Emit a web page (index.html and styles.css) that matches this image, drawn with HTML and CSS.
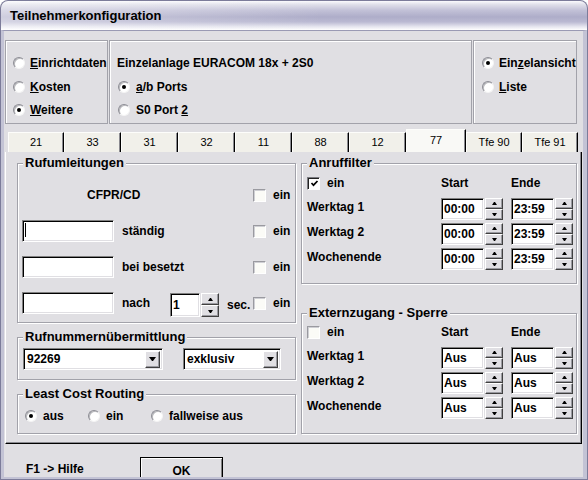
FILE: index.html
```html
<!DOCTYPE html>
<html>
<head>
<meta charset="utf-8">
<title>Teilnehmerkonfiguration</title>
<link rel="stylesheet" href="styles.css">
</head>
<body>
<div class="window">
  <div class="titlebar">Teilnehmerkonfiguration</div>
  <div class="frame">
    <div class="client">
      <div class="toprow">
        <div class="panel p1">
          <div class="rrow"><span class="radio"></span><span><u>E</u>inrichtdaten</span></div>
          <div class="rrow"><span class="radio"></span><span><u>K</u>osten</span></div>
          <div class="rrow"><span class="radio on"></span><span><u>W</u>eitere</span></div>
        </div>
        <div class="panel p2">
          <div class="rrow">Einzelanlage EURACOM 18x + 2S0</div>
          <div class="rrow ind"><span class="radio on"></span><span><u>a</u>/b Ports</span></div>
          <div class="rrow ind"><span class="radio"></span><span>S0 Port <u>2</u></span></div>
        </div>
        <div class="panel p3">
          <div class="rrow"><span class="radio on"></span><span>Ein<u>z</u>elansicht</span></div>
          <div class="rrow"><span class="radio"></span><span><u>L</u>iste</span></div>
        </div>
      </div>

      <div class="tabs">
        <div class="tab first">21</div>
        <div class="tab">33</div>
        <div class="tab">31</div>
        <div class="tab">32</div>
        <div class="tab">11</div>
        <div class="tab">88</div>
        <div class="tab">12</div>
        <div class="tab sel">77</div>
        <div class="tab narrow">Tfe 90</div>
        <div class="tab narrow">Tfe 91</div>
      </div>

      <div class="pane">
        <div class="col">
          <div class="group g-ruf">
            <div class="gtitle">Rufumleitungen</div>
            <div class="gbody ruf-body">
              <div class="frow">
                <span class="cfpr">CFPR/CD</span>
                <span class="check"></span><span>ein</span>
              </div>
              <div class="frow">
                <span class="edit numedit"><span class="caret"></span></span>
                <span>ständig</span>
                <span class="check"></span><span>ein</span>
              </div>
              <div class="frow">
                <span class="edit numedit"></span>
                <span>bei besetzt</span>
                <span class="check"></span><span>ein</span>
              </div>
              <div class="frow">
                <span class="edit numedit"></span>
                <span class="nach">
                  <span class="nachlbl">nach</span>
                  <span class="spinfield tall">
                    <span class="edit secedit">1</span>
                    <span class="spin"><span class="sbtn up"></span><span class="sbtn down"></span></span>
                  </span>
                  <span class="seclbl">sec.</span>
                </span>
                <span class="check"></span><span>ein</span>
              </div>
            </div>
          </div>

          <div class="group g-rn">
            <div class="gtitle">Rufnummernübermittlung</div>
            <div class="gbody rn-body">
              <div class="combo c1"><span class="ctext">92269</span><span class="dd"></span></div>
              <div class="combo c2"><span class="ctext">exklusiv</span><span class="dd"></span></div>
            </div>
          </div>

          <div class="group g-lcr">
            <div class="gtitle">Least Cost Routing</div>
            <div class="gbody lcr-body">
              <div class="litem"><span class="radio on"></span><span>aus</span></div>
              <div class="litem"><span class="radio"></span><span>ein</span></div>
              <div class="litem"><span class="radio"></span><span>fallweise aus</span></div>
            </div>
          </div>
        </div>

        <div class="col">
          <div class="group g-af">
            <div class="gtitle">Anruffilter</div>
            <div class="gbody af-body">
              <div class="hrow">
                <span class="hcheck"><span class="check checked"><svg viewBox="0 0 9 9" width="9" height="9"><polyline points="1.5,4 3.5,6.2 7.5,2" fill="none" stroke="#000" stroke-width="1.7"/></svg></span><span>ein</span></span>
                <span>Start</span>
                <span>Ende</span>
              </div>
              <div class="trow">
                <span class="tlbl">Werktag 1</span>
                <span class="spinfield"><span class="edit tedit">00:00</span><span class="spin"><span class="sbtn up"></span><span class="sbtn down"></span></span></span>
                <span class="spinfield"><span class="edit tedit">23:59</span><span class="spin"><span class="sbtn up"></span><span class="sbtn down"></span></span></span>
              </div>
              <div class="trow">
                <span class="tlbl">Werktag 2</span>
                <span class="spinfield"><span class="edit tedit">00:00</span><span class="spin"><span class="sbtn up"></span><span class="sbtn down"></span></span></span>
                <span class="spinfield"><span class="edit tedit">23:59</span><span class="spin"><span class="sbtn up"></span><span class="sbtn down"></span></span></span>
              </div>
              <div class="trow">
                <span class="tlbl">Wochenende</span>
                <span class="spinfield"><span class="edit tedit">00:00</span><span class="spin"><span class="sbtn up"></span><span class="sbtn down"></span></span></span>
                <span class="spinfield"><span class="edit tedit">23:59</span><span class="spin"><span class="sbtn up"></span><span class="sbtn down"></span></span></span>
              </div>
            </div>
          </div>

          <div class="group g-ex">
            <div class="gtitle">Externzugang - Sperre</div>
            <div class="gbody ex-body">
              <div class="hrow">
                <span class="hcheck"><span class="check"></span><span>ein</span></span>
                <span>Start</span>
                <span>Ende</span>
              </div>
              <div class="trow">
                <span class="tlbl">Werktag 1</span>
                <span class="spinfield"><span class="edit tedit">Aus</span><span class="spin"><span class="sbtn up"></span><span class="sbtn down"></span></span></span>
                <span class="spinfield"><span class="edit tedit">Aus</span><span class="spin"><span class="sbtn up"></span><span class="sbtn down"></span></span></span>
              </div>
              <div class="trow">
                <span class="tlbl">Werktag 2</span>
                <span class="spinfield"><span class="edit tedit">Aus</span><span class="spin"><span class="sbtn up"></span><span class="sbtn down"></span></span></span>
                <span class="spinfield"><span class="edit tedit">Aus</span><span class="spin"><span class="sbtn up"></span><span class="sbtn down"></span></span></span>
              </div>
              <div class="trow">
                <span class="tlbl">Wochenende</span>
                <span class="spinfield"><span class="edit tedit">Aus</span><span class="spin"><span class="sbtn up"></span><span class="sbtn down"></span></span></span>
                <span class="spinfield"><span class="edit tedit">Aus</span><span class="spin"><span class="sbtn up"></span><span class="sbtn down"></span></span></span>
              </div>
            </div>
          </div>
        </div>
      </div>

      <div class="footer">
        <span class="help">F1 -&gt; Hilfe</span>
        <div class="okbtn">OK</div>
      </div>
    </div>
  </div>
</div>
</body>
</html>
```
FILE: styles.css
```css
* { box-sizing: border-box; }
html, body { margin: 0; padding: 0; }
body {
  width: 588px; height: 480px; overflow: hidden; background: #fff;
  font-family: "Liberation Sans", Arial, sans-serif;
  font-size: 12px; font-weight: 700; color: #000;
}
u { text-decoration: underline; text-underline-offset: 1px; }

.window {
  width: 588px; height: 480px; background: #7c7c9a;
  border-radius: 8px 8px 0 0; overflow: hidden;
  display: flex; flex-direction: column;
}
.titlebar {
  height: 29px; margin: 1px 1px 0; border-radius: 7px 7px 0 0;
  padding-left: 9px; line-height: 30px; font-size: 13px; font-weight: 700;
  background:
    linear-gradient(to right, rgba(255,255,255,0.4), rgba(255,255,255,0) 55%),
    linear-gradient(to bottom, #fbfbfd 0%, #e0e0ea 12%, #c2c1d7 32%, #aeadc9 55%, #bab9d2 72%, #e4e4ee 88%, #ffffff 100%);
}
.frame {
  flex: 1; min-height: 0; margin: 0 1px 1px; display: flex;
  border-style: solid; border-width: 1px 4px 2px 3px;
  border-color: #9a9ab4 #c3c3d5 #c3c3d5 #c3c3d5;
}
.client {
  flex: 1; background: #e0dfe3; display: flex; flex-direction: column; overflow: hidden;
}

/* top panels */
.toprow { display: flex; gap: 1px; margin-top: 9px; padding-left: 1px; height: 84px; }
.panel {
  height: 84px; border: 1px solid #a2a2aa; box-shadow: inset 1px 1px #fff;
  display: flex; flex-direction: column; gap: 7.5px; padding-top: 14px;
}
.p1 { width: 103px; padding-left: 7px; }
.p2 { width: 363px; padding-left: 7px; }
.p3 { width: 104px; padding-left: 8px; }
.rrow { display: flex; align-items: center; height: 16px; gap: 5px; white-space: nowrap; }
.rrow.ind { margin-left: 1px; gap: 6px; }

.radio {
  width: 12px; height: 12px; flex: none; border-radius: 50%; background: #fff;
  border: 1px solid; border-color: #8c8c94 #f4f4f4 #f4f4f4 #8c8c94;
  box-shadow: inset 1px 1px #b8b8bc;
  display: flex; align-items: center; justify-content: center;
}
.radio.on::after { content: ""; width: 4px; height: 4px; border-radius: 50%; background: #000; }

/* tabs */
.tabs { display: flex; align-items: flex-end; height: 23px; margin-top: 5px; padding-left: 4px; }
.tab {
  width: 57px; height: 20px; background: #f1f0ea;
  border-top: 1px solid #fdfdfb; border-left: 1px solid #fdfdfb; border-right: 1px solid #000;
  box-shadow: inset -1px 0 #8a8a90;
  font-size: 11px; font-weight: 400; text-align: center; line-height: 19px;
}
.tab.first { width: 56px; }
.tab.narrow { width: 56px; }
.tab.sel { width: 60px; height: 23px; background: #f9f9f6; line-height: 21px; }

/* tab pane */
.pane {
  width: 577px; height: 292px; margin-left: 1px; flex: none;
  border-left: 1px solid #fff; border-right: 1px solid #000; border-bottom: 1px solid #000;
  box-shadow: inset -1px -1px #8a8a90;
  padding: 11px 0 0 11px;
  display: grid; grid-template-columns: 279px 276px; column-gap: 5px; align-items: start;
}
.col { display: flex; flex-direction: column; }

.group {
  border: 1px solid #a2a2aa; box-shadow: inset 1px 1px #fff, 1px 1px #fff;
  display: flex; flex-direction: column;
}
.gtitle {
  align-self: flex-start; margin: -8px 0 0 5px; padding: 0 2px;
  height: 14px; line-height: 14px; font-size: 13px; background: #e0dfe3; white-space: nowrap;
}
.gbody { display: flex; }

.g-ruf { height: 160px; }
.g-rn { height: 43px; margin-top: 14px; }
.g-lcr { height: 40px; margin-top: 14px; }
.g-af { height: 121px; }
.g-ex { height: 121px; margin-top: 29px; }

/* Rufumleitungen */
.ruf-body { flex-direction: column; gap: 14px; padding: 14px 0 0 4px; }
.frow {
  display: grid; grid-template-columns: 100px 131px 20px auto;
  height: 22px; align-items: center; white-space: nowrap;
}
.cfpr { grid-column: 1 / span 2; padding-left: 65px; }
.numedit { width: 92px; height: 22px; }
.caret { display: block; width: 1px; height: 14px; background: #000; margin: 2px 0 0 1px; }
.nach { display: flex; align-items: flex-start; height: 22px; }
.nachlbl { width: 48px; line-height: 22px; }
.seclbl { margin-left: 8px; line-height: 26px; }

.edit {
  display: block; background: #fff;
  border: 1px solid; border-color: #808080 #fff #fff #808080;
  box-shadow: inset 1px 1px #000, inset -1px -1px #e0dfe3;
  padding-left: 1px; white-space: nowrap;
}
.spinfield { display: flex; gap: 1px; height: 22px; }
.spinfield.tall { height: 24px; margin-top: 1px; }
.secedit { width: 30px; height: 24px; line-height: 22px; padding-left: 2px; }
.tedit { width: 43px; height: 22px; line-height: 21px; padding-left: 2px; }
.spin { width: 18px; display: flex; flex-direction: column; }
.sbtn {
  flex: 1; background: #e0dfe3;
  border: 1px solid; border-color: #fff #404040 #404040 #fff;
  box-shadow: inset -1px -1px #9a9aa0;
  display: flex; align-items: center; justify-content: center;
}
.sbtn::after { content: ""; width: 1px; height: 0; border-left: 2px solid transparent; border-right: 2px solid transparent; }
.sbtn.up::after { border-bottom: 3px solid #000; }
.sbtn.down::after { border-top: 3px solid #000; }

.check {
  width: 13px; height: 13px; flex: none; background: #fbfbf7;
  border: 1px solid; border-color: #9a9aa0 #fff #fff #9a9aa0;
  box-shadow: inset 1px 1px #cfcfd4;
  display: flex; align-items: center; justify-content: center;
}
.check.checked { border-color: #7a7a80 #fff #fff #7a7a80; box-shadow: inset 1px 1px #222; background: #fff; }
.check svg { display: block; margin: 1px 0 0 1px; }

/* Rufnummernübermittlung */
.rn-body { padding: 4px 0 0 5px; gap: 20px; }
.combo {
  height: 22px; display: flex; align-items: center; background: #fff;
  border: 1px solid; border-color: #808080 #fff #fff #808080;
  box-shadow: inset 1px 1px #000, inset -1px -1px #e0dfe3;
  padding: 2px 2px 2px 3px;
}
.c1 { width: 140px; }
.c2 { width: 98px; }
.ctext { flex: 1; }
.dd {
  width: 15px; height: 17px; background: #e0dfe3;
  border: 1px solid; border-color: #fff #404040 #404040 #fff;
  box-shadow: inset -1px -1px #9a9aa0;
  display: flex; align-items: center; justify-content: center;
}
.dd::after { content: ""; width: 1px; height: 0; border-left: 3px solid transparent; border-right: 3px solid transparent; border-top: 4px solid #000; }

/* LCR */
.lcr-body { padding: 8px 0 0 7px; }
.litem { display: flex; align-items: center; gap: 6px; height: 14px; width: 63px; white-space: nowrap; }

/* Anruffilter / Externzugang */
.af-body, .ex-body { flex-direction: column; gap: 3px; padding-left: 5px; }
.af-body { padding-top: 6px; }
.ex-body { padding-top: 5px; }
.hrow, .trow { display: grid; grid-template-columns: 134px 70px auto; white-space: nowrap; }
.hrow { height: 14px; align-items: center; margin-bottom: 5px; }
.hcheck { display: flex; align-items: center; gap: 7px; }
.trow { height: 22px; align-items: start; }
.tlbl { line-height: 18px; }

/* footer */
.footer { flex: 1; display: flex; padding: 13px 0 0 22px; min-height: 0; }
.help { width: 114px; line-height: 24px; }
.okbtn {
  width: 83px; height: 24px; flex: none; background: #e0dfe3;
  border: 1px solid #000; box-shadow: inset 1px 1px #fff, inset -1px -1px #808080;
  text-align: center; line-height: 26px;
}
```
